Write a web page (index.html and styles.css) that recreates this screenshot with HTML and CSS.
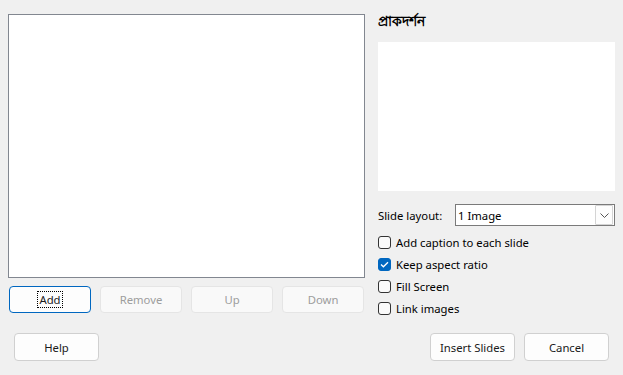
FILE: index.html
```html
<!DOCTYPE html>
<html>
<head>
<meta charset="utf-8">
<link rel="stylesheet" href="styles.css">
</head>
<body>
<div class="dialog">
  <div class="main">
    <div class="left">
      <div class="listbox"></div>
      <div class="list-buttons">
        <button class="btn focused"><span class="focus-ring">Add</span></button>
        <button class="btn disabled">Remove</button>
        <button class="btn disabled">Up</button>
        <button class="btn disabled">Down</button>
      </div>
    </div>
    <div class="right">
      <div class="heading">প্রাকদর্শন</div>
      <div class="preview"></div>
      <div class="layout-row">
        <span class="label">Slide layout:</span>
        <div class="select">
          <span class="select-value">1 Image</span>
          <span class="select-arrow">
            <svg width="9" height="5" viewBox="0 0 9 5"><path d="M0.5 0.5 L4.5 4.5 L8.5 0.5" fill="none" stroke="#555" stroke-width="1"/></svg>
          </span>
        </div>
      </div>
      <div class="checks">
        <div class="check"><span class="box"></span><span>Add caption to each slide</span></div>
        <div class="check"><span class="box checked"><svg width="9" height="7" viewBox="0 0 9 7"><path d="M1 3.5 L3.4 5.8 L8 1.2" fill="none" stroke="#fff" stroke-width="1.3"/></svg></span><span>Keep aspect ratio</span></div>
        <div class="check"><span class="box"></span><span>Fill Screen</span></div>
        <div class="check"><span class="box"></span><span>Link images</span></div>
      </div>
    </div>
  </div>
  <div class="footer">
    <button class="btn big">Help</button>
    <div class="footer-right">
      <button class="btn big">Insert Slides</button>
      <button class="btn big">Cancel</button>
    </div>
  </div>
</div>
</body>
</html>
```

FILE: styles.css
```css
html, body {
  margin: 0;
  padding: 0;
  background: #f0f0f0;
  width: 623px;
  height: 375px;
  overflow: hidden;
  font-family: "Noto Sans", "Liberation Sans", sans-serif;
  font-size: 11.3px;
  color: #000;
}

.dialog {
  padding: 14px 8px 0 8px;
  display: flex;
  flex-direction: column;
}

.main {
  display: flex;
  gap: 13px;
}

.left {
  width: 357px;
  display: flex;
  flex-direction: column;
}

.listbox {
  height: 262px;
  background: #fff;
  border: 1px solid #828790;
}

.list-buttons {
  display: flex;
  gap: 9px;
  margin-top: 8px;
  padding-left: 1px;
}

.btn {
  font-family: inherit;
  font-size: 11.3px;
  color: #1a1a1a;
  background: #fdfdfd;
  border: 1px solid #d0d0d0;
  border-radius: 4px;
  width: 82px;
  height: 27px;
  padding: 0;
  display: flex;
  align-items: center;
  justify-content: center;
}

.btn.focused {
  border: 1px solid #0067c0;
  background: #fdfdfd;
}

.focus-ring {
  outline: 1px dotted #000;
  padding: 0 1px;
  line-height: 15px;
}

.btn.disabled {
  color: #9d9d9d;
  background: #f9f9f9;
  border-color: #e5e5e5;
}

.right {
  width: 237px;
  display: flex;
  flex-direction: column;
}

.heading {
  font-weight: bold;
  font-size: 14px;
  height: 20px;
  line-height: 20px;
  margin-top: -3px;
  margin-bottom: 11px;
}

.preview {
  height: 149px;
  background: #fff;
}

.layout-row {
  display: flex;
  align-items: center;
  margin-top: 13px;
  height: 22px;
}

.label {
  width: 77px;
}

.select {
  flex: 1;
  height: 20px;
  border: 1px solid #7a7a7a;
  background: #fff;
  display: flex;
  align-items: center;
  justify-content: space-between;
}

.select-value {
  padding-left: 2px;
}

.select-arrow {
  width: 16px;
  height: 18px;
  margin-right: 1px;
  border: 1px solid #d4d4d4;
  border-radius: 1px;
  background: #fdfdfd;
  display: flex;
  align-items: center;
  justify-content: center;
}

.checks {
  display: flex;
  flex-direction: column;
  margin-top: 5px;
}

.check {
  display: flex;
  align-items: center;
  gap: 5px;
  height: 22px;
}

.box {
  width: 11px;
  height: 11px;
  border: 1px solid #333;
  border-radius: 3px;
  background: #fafafa;
  display: flex;
  align-items: center;
  justify-content: center;
}

.box.checked {
  background: #0067c0;
  border-color: #0067c0;
}

.footer {
  display: flex;
  justify-content: space-between;
  margin-top: 14px;
  padding: 0 6px 0 6px;
}

.footer-right {
  display: flex;
  gap: 9px;
}

.btn.big {
  width: 85px;
  height: 28px;
}
```
